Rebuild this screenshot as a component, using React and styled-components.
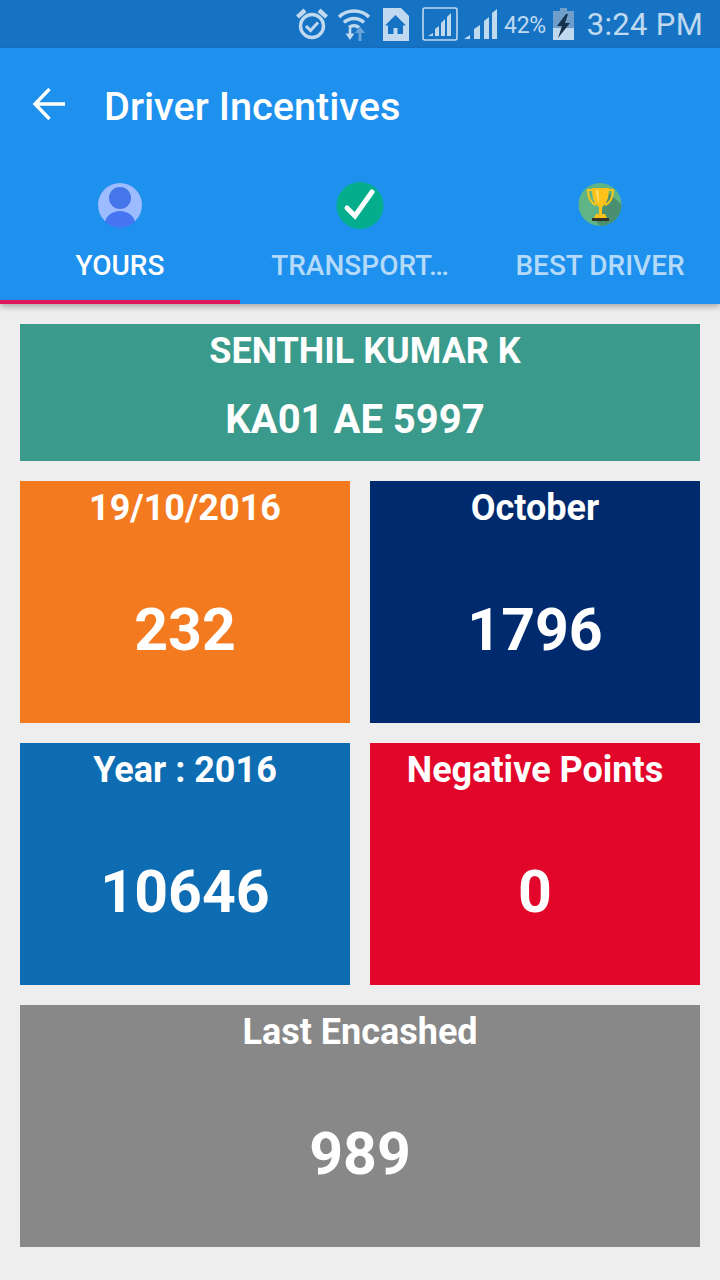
import React from 'react';
import styled, { createGlobalStyle } from 'styled-components';

const GlobalStyle = createGlobalStyle`
  html, body { margin: 0; padding: 0; background: #eeeeee; }
  * { box-sizing: border-box; }
  body { font-family: Roboto, "Liberation Sans", sans-serif; }
`;

const Screen = styled.div`
  width: 720px;
  height: 1280px;
  overflow: hidden;
  background: #eeeeee;
  display: flex;
  flex-direction: column;
`;

const StatusBar = styled.div`
  height: 48px;
  background: #1673c4;
  color: #c0d9ef;
  display: flex;
  align-items: center;
  justify-content: flex-end;
  padding-right: 17px;
`;

const StatusIcon = styled.svg`
  display: block;
  flex: none;
  margin-right: ${(p) => p.$gap ?? 0}px;
`;

const Percent = styled.span`
  font-size: 23px;
  margin: 2px 7px 0 7px;
  letter-spacing: -0.3px;
`;

const Clock = styled.span`
  font-size: 31px;
  margin-left: 13px;
  letter-spacing: 0.3px;
`;

const AppHeader = styled.header`
  background: #1e90ee;
  height: 256px;
  box-shadow: 0 3px 6px rgba(0, 0, 0, 0.28);
  display: flex;
  flex-direction: column;
`;

const TitleRow = styled.div`
  height: 116px;
  display: flex;
  align-items: center;
  padding: 0 0 0 32px;
`;

const BackIcon = styled.svg`
  display: block;
  margin-top: -4px;
`;

const Title = styled.h1`
  margin: 0 0 0 38px;
  font-size: 39.7px;
  font-weight: 500;
  color: #ffffff;
`;

const Tabs = styled.div`
  display: flex;
  flex: 1;
`;

const Tab = styled.div`
  width: 240px;
  display: flex;
  flex-direction: column;
  align-items: center;
  padding-top: 17px;
  border-bottom: 4px solid ${(p) => (p.$active ? '#e0185a' : 'transparent')};
`;

const TabIcon = styled.svg`
  display: block;
  height: 48px;
`;

const TabLabel = styled.span`
  margin-top: 21px;
  font-size: 28px;
  line-height: 32px;
  font-weight: 500;
  white-space: nowrap;
  color: ${(p) => (p.$active ? '#ffffff' : '#b4daf9')};
`;

const Content = styled.main`
  flex: 1;
  padding: 20px;
  display: flex;
  flex-direction: column;
  gap: 20px;
`;

const DriverCard = styled.section`
  height: 137px;
  background: #3a9a8c;
  color: #ffffff;
  font-weight: 700;
  display: flex;
  flex-direction: column;
  align-items: center;
`;

const DriverName = styled.div`
  font-size: 36px;
  line-height: 54px;
  margin-left: 10px;
`;

const DriverPlate = styled.div`
  font-size: 40px;
  line-height: 44px;
  margin-top: 20px;
  margin-right: 10px;
`;

const Cards = styled.div`
  display: grid;
  grid-template-columns: 330px 330px;
  grid-auto-rows: 242px;
  gap: 20px;
`;

const StatCard = styled.section`
  background: ${(p) => p.$bg};
  grid-column: ${(p) => (p.$wide ? '1 / -1' : 'auto')};
  color: #ffffff;
  font-weight: 700;
  display: flex;
  flex-direction: column;
  align-items: center;
`;

const StatLabel = styled.div`
  font-size: 36px;
  line-height: 52px;
  margin-top: 1px;
`;

const StatValue = styled.div`
  font-size: 59px;
  line-height: 70px;
  margin-top: 61px;
`;

const stats = [
  { label: '19/10/2016', value: '232', bg: '#f47a1f' },
  { label: 'October', value: '1796', bg: '#002a6e' },
  { label: 'Year : 2016', value: '10646', bg: '#0e6cb3' },
  { label: 'Negative Points', value: '0', bg: '#e2062b' },
  { label: 'Last Encashed', value: '989', bg: '#888888', wide: true },
];

function AlarmIcon() {
  return (
    <StatusIcon width="32" height="34" viewBox="0 0 32 34" fill="none" stroke="currentColor" $gap={9}>
      <circle cx="16" cy="19" r="11.500" strokeWidth="3.400" />
      <path d="M10 19l4.500 4.500 7.500-8" strokeWidth="3" />
      <path d="M0 8.500L7.500 1.500l3 3.500L3 11.500zM32 8.500L24.500 1.500l-3 3.500L29 11.500z" fill="currentColor" stroke="none" />
    </StatusIcon>
  );
}

function WifiIcon() {
  return (
    <StatusIcon width="34" height="36" viewBox="0 0 34 36" fill="none" stroke="currentColor" $gap={12}>
      <path d="M2 11C10 3 24 3 32 11" strokeWidth="3.500" />
      <path d="M7 16.500C12.500 11 21.500 11 27 16.500" strokeWidth="3.500" />
      <path d="M12 21.500C15 19 19 19 22 21.500" strokeWidth="3.500" />
      <path d="M13 22v9" strokeWidth="2.600" />
      <path d="M8.500 27.500L13 34l4.500-6.500z" fill="currentColor" stroke="none" />
      <path d="M23 35v-9" strokeWidth="3" stroke="#6ba3d8" />
      <path d="M18 27l5-6.500 5 6.500z" fill="#6ba3d8" stroke="none" />
    </StatusIcon>
  );
}

function SimHomeIcon() {
  return (
    <StatusIcon width="26" height="33" viewBox="0 0 26 33" $gap={13}>
      <path d="M0 0h18l8 8v25H0z" fill="currentColor" />
      <path d="M12.500 7L2 17.500h3V26h5.500v-6h4v6H20v-8.500h3z" fill="#1673c4" />
    </StatusIcon>
  );
}

function SignalBoxIcon() {
  return (
    <StatusIcon width="36" height="34" viewBox="0 0 36 34" fill="none" $gap={6}>
      <rect x="1" y="1" width="34" height="32" rx="2" stroke="currentColor" strokeWidth="1.600" />
      <path d="M6 29l5-3v3zM13 29v-7l4-3v10zM19 29V16l4-4v17zM25 29V10l4-4v23z" fill="currentColor" />
    </StatusIcon>
  );
}

function SignalIcon() {
  return (
    <StatusIcon width="33" height="32" viewBox="0 0 33 32">
      <path d="M0 31l6-4v4zM10 31V21l6-4v14zM20 31V13l5-4v22zM28 31V5l5-4v30z" fill="currentColor" />
    </StatusIcon>
  );
}

function BatteryIcon() {
  return (
    <StatusIcon width="21" height="32" viewBox="0 0 21 32">
      <path d="M7 0h7v3h7v29H0V3h7z" fill="#6f9ecb" />
      <path d="M0 20h21v12H0z" fill="currentColor" />
      <path d="M13 6L4 18h5L5 30l12-15h-5l3-9z" fill="#16324d" />
    </StatusIcon>
  );
}

function PersonIcon() {
  return (
    <TabIcon width="44" viewBox="0 0 44 48">
      <circle cx="22" cy="24" r="22" fill="#9dbcff" />
      <ellipse cx="22" cy="17" rx="11" ry="11" fill="#4575ea" />
      <path d="M7 41c1-6 7-11 15-11s14 5 15 11c-4 3.500-9 5.500-15 5.500S11 44.500 7 41z" fill="#4575f0" />
    </TabIcon>
  );
}

function CheckIcon() {
  return (
    <TabIcon width="48" viewBox="0 0 48 48">
      <circle cx="24" cy="24.500" r="23.500" fill="#04ae8c" />
      <path d="M11 27l8 8L36 11" fill="none" stroke="#ffffff" strokeWidth="5" strokeLinecap="round" />
    </TabIcon>
  );
}

function TrophyIcon() {
  return (
    <TabIcon width="44" viewBox="0 0 44 48">
      <circle cx="22" cy="23.500" r="21.500" fill="#5fb585" />
      <path d="M31 12L43.500 23.500A21.500 21.500 0 0 1 22 45L16 38l8-10z" fill="#4a8f70" />
      <path d="M14 9H10c0 8 3 13 8 15M31 9h4c0 8-3 13-8 15" fill="none" stroke="#f7c51e" strokeWidth="2" />
      <path d="M14 7h17c0 9-2 16-7 19v7h3l2 4H16l2-4h3v-7c-5-3-7-10-7-19z" fill="#fcc21b" />
      <path d="M18 9h2l1 12h-1z" fill="#ffe27a" />
      <path d="M14 37h17v3H14z" fill="#33322a" />
    </TabIcon>
  );
}

export default function App() {
  return (
    <Screen>
      <GlobalStyle />
      <StatusBar>
        <AlarmIcon />
        <WifiIcon />
        <SimHomeIcon />
        <SignalBoxIcon />
        <SignalIcon />
        <Percent>42%</Percent>
        <BatteryIcon />
        <Clock>3:24 PM</Clock>
      </StatusBar>
      <AppHeader>
        <TitleRow>
          <BackIcon width="34" height="34" viewBox="0 0 34 34" fill="none" stroke="#fff" strokeWidth="3.400">
            <path d="M33 17H3M17.500 2L3 17l14.500 15" />
          </BackIcon>
          <Title>Driver Incentives</Title>
        </TitleRow>
        <Tabs>
          <Tab $active>
            <PersonIcon />
            <TabLabel $active>YOURS</TabLabel>
          </Tab>
          <Tab>
            <CheckIcon />
            <TabLabel>TRANSPORT…</TabLabel>
          </Tab>
          <Tab>
            <TrophyIcon />
            <TabLabel>BEST DRIVER</TabLabel>
          </Tab>
        </Tabs>
      </AppHeader>
      <Content>
        <DriverCard>
          <DriverName>SENTHIL KUMAR K</DriverName>
          <DriverPlate>KA01 AE 5997</DriverPlate>
        </DriverCard>
        <Cards>
          {stats.map((s) => (
            <StatCard key={s.label} $bg={s.bg} $wide={s.wide}>
              <StatLabel>{s.label}</StatLabel>
              <StatValue>{s.value}</StatValue>
            </StatCard>
          ))}
        </Cards>
      </Content>
    </Screen>
  );
}
